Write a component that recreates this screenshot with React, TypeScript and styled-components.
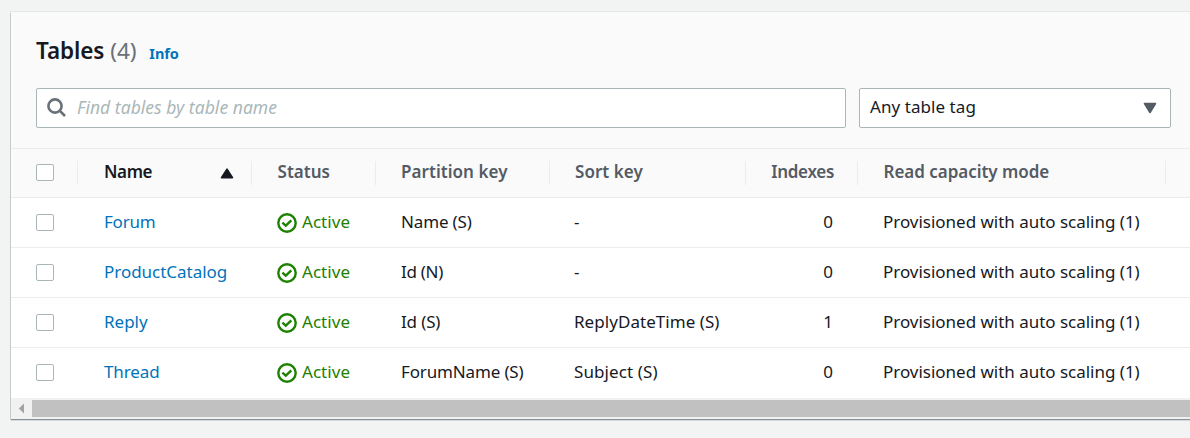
import React from 'react';
import styled, { createGlobalStyle } from 'styled-components';

const GlobalStyle = createGlobalStyle`
  * { box-sizing: border-box; }
  body {
    margin: 0;
    overflow: hidden;
    background: #f2f3f3;
    color: #16191f;
    font: 17px/24px "Noto Sans", "Open Sans", sans-serif;
  }
`;

const Page = styled.main`
  height: 438px;
  padding: 12px 0 0 11px;
  overflow: hidden;
`;

const Panel = styled.section`
  width: 1200px;
  height: 407px;
  background: #fff;
  box-shadow: 0 1px 0 0 #879196, -1px 1px 0 0 #c6cccd, 0 0 0 1px #e4e8e8, 0 2px 0 0 #d5dbdb;
`;

const PanelHeader = styled.header`
  height: 136px;
  padding: 24px 0 0 25px;
  background: #fafafa;
`;

const TitleLine = styled.div`
  display: flex;
  align-items: baseline;
  height: 30px;
  line-height: 30px;
`;

const Text = styled.span<{ $track?: number }>`
  letter-spacing: ${(p) => p.$track ?? 0}px;
  white-space: nowrap;
`;

const Title = styled.h2`
  margin: 0;
  font-size: 22.5px;
  font-weight: 600;
  letter-spacing: -0.1px;
`;

const Count = styled.span`
  margin-left: 6px;
  color: #687078;
  font-size: 22.5px;
  letter-spacing: -0.1px;
`;

const InfoLink = styled.a`
  margin-left: 13px;
  color: #0073bb;
  font-size: 14.5px;
  font-weight: 700;
  letter-spacing: -0.1px;
`;

const Filters = styled.div`
  display: flex;
  gap: 13px;
  margin-top: 22px;
`;

const Field = styled.div<{ $width: number }>`
  display: flex;
  align-items: center;
  width: ${(p) => p.$width}px;
  height: 40px;
  padding: 0 13px 2px 10px;
  border: 1px solid #aab7b8;
  border-radius: 2px;
  background: #fff;
`;

const Placeholder = styled(Text)`
  margin-left: 10px;
  color: #aab7b8;
  font-size: 17.5px;
  font-style: italic;
`;

const SearchGlyph = styled.svg`
  width: 20px;
  height: 20px;
  margin-top: 2px;
`;

const DownGlyph = styled.svg`
  width: 14px;
  height: 12px;
  margin: 2px 0 0 auto;
`;

const Row = styled.div`
  display: grid;
  grid-template-columns: 67px 174px 124px 174px 196px 112px 308px 1fr;
  height: 50px;
  border-top: 1px solid #eaeded;
  background: #fff;
`;

const HeadRow = styled(Row)`
  border-bottom: 1px solid #eaeded;
  background: #fafafa;
`;

const BodyRows = styled.div`
  height: 200px;
  & > :first-child { border-top: 0; height: 49px; }
`;

const Cell = styled.div<{ $end?: boolean; $inset?: number }>`
  display: flex;
  align-items: center;
  justify-content: ${(p) => (p.$end ? 'flex-end' : 'flex-start')};
  padding: 0 25px 1px ${(p) => (p.$end ? 0 : p.$inset ?? 25)}px;
`;

const HeadCell = styled(Cell)<{ $active?: boolean }>`
  height: 24px;
  margin-top: 12px;
  padding-right: 23px;
  padding-bottom: 2px;
  border-right: 1px solid #eaeded;
  color: ${(p) => (p.$active ? '#16191f' : '#545b64')};
  font-weight: 600;
`;

const CheckCell = styled(HeadCell)`
  padding: 0 0 1px 25px;
`;

const BodyCheckCell = styled(Cell)`
  padding: 0 0 0 25px;
`;

const Checkbox = styled.span`
  width: 18px;
  height: 17px;
  border: 1px solid #aab7b8;
  border-radius: 2px;
  background: #fff;
`;

const SortGlyph = styled.svg`
  width: 14px;
  height: 12px;
  margin: 3px -6px 0 auto;
`;

const TableLink = styled(Text)`
  color: #0073bb;
`;

const Status = styled.span`
  display: flex;
  align-items: center;
  gap: 5px;
  color: #1d8102;
`;

const StatusGlyph = styled.svg`
  width: 20px;
  height: 20px;
  margin-top: 2px;
  flex: none;
`;

const ScrollTrack = styled.div`
  display: flex;
  align-items: center;
  height: 21px;
  background: #f1f1f1;
`;

const ScrollArrow = styled.svg`
  width: 21px;
  height: 21px;
`;

const ScrollThumb = styled.div`
  flex: 1;
  height: 17px;
  background: #c1c1c1;
`;

type Tracked = [string, number];

const headings: { label: Tracked; inset?: number; end?: boolean }[] = [
  { label: ['Status', 0], inset: 25.6 },
  { label: ['Partition key', 0.05] },
  { label: ['Sort key', 0.05] },
  { label: ['Indexes', -0.3], end: true },
  { label: ['Read capacity mode', -0.03], inset: 25.5 },
];

const mode: Tracked = ['Provisioned with auto scaling (1)', -0.02];

const tables: { name: Tracked; partition: Tracked; sort: Tracked; indexes: string }[] = [
  { name: ['Forum', -0.2], partition: ['Name (S)', -0.15], sort: ['-', 0], indexes: '0' },
  { name: ['ProductCatalog', -0.03], partition: ['Id (N)', -0.3], sort: ['-', 0], indexes: '0' },
  { name: ['Reply', 0], partition: ['Id (S)', -0.15], sort: ['ReplyDateTime (S)', 0.05], indexes: '1' },
  { name: ['Thread', -0.1], partition: ['ForumName (S)', -0.15], sort: ['Subject (S)', 0.1], indexes: '0' },
];

const Label = ({ value }: { value: Tracked }) => <Text $track={value[1]}>{value[0]}</Text>;

export default function App() {
  return (
    <Page>
      <GlobalStyle />
      <Panel>
        <PanelHeader>
          <TitleLine>
            <Title>Tables</Title>
            <Count>(4)</Count>
            <InfoLink>Info</InfoLink>
          </TitleLine>
          <Filters>
            <Field $width={810}>
              <SearchGlyph viewBox="0 0 20 20" fill="none" stroke="#687078" strokeWidth="2.6">
                <circle cx="8" cy="8" r="6.6" />
                <path d="M12.6 12.6 18 18" />
              </SearchGlyph>
              <Placeholder $track={0.03}>Find tables by table name</Placeholder>
            </Field>
            <Field $width={312}>
              <Text $track={0.06}>Any table tag</Text>
              <DownGlyph viewBox="0 0 14 12">
                <path d="M1.5 1.5h11L7 10.5z" fill="#545b64" stroke="#545b64" strokeWidth="1.6" strokeLinejoin="round" />
              </DownGlyph>
            </Field>
          </Filters>
        </PanelHeader>
        <HeadRow>
          <CheckCell><Checkbox /></CheckCell>
          <HeadCell $active $inset={26}>
            <Text $track={-0.4}>Name</Text>
            <SortGlyph viewBox="0 0 14 12">
              <path d="M1.5 9.6h11L7 1.2z" fill="#16191f" stroke="#16191f" strokeWidth="1.6" strokeLinejoin="round" />
            </SortGlyph>
          </HeadCell>
          {headings.map((h) => (
            <HeadCell key={h.label[0]} $end={h.end} $inset={h.inset}><Label value={h.label} /></HeadCell>
          ))}
        </HeadRow>
        <BodyRows>
          {tables.map((t) => (
            <Row key={t.name[0]}>
              <BodyCheckCell><Checkbox /></BodyCheckCell>
              <Cell $inset={26}><TableLink $track={t.name[1]}>{t.name[0]}</TableLink></Cell>
              <Cell>
                <Status>
                  <StatusGlyph viewBox="0 0 20 20" fill="none" stroke="#1d8102" strokeWidth="2.4">
                    <circle cx="10" cy="10" r="8.7" />
                    <path d="m5.4 9.6 3.4 3.1 5.5-5.3" />
                  </StatusGlyph>
                  <Text $track={0.05}>Active</Text>
                </Status>
              </Cell>
              <Cell><Label value={t.partition} /></Cell>
              <Cell $inset={24}><Label value={t.sort} /></Cell>
              <Cell $end><Text>{t.indexes}</Text></Cell>
              <Cell><Label value={mode} /></Cell>
            </Row>
          ))}
        </BodyRows>
        <ScrollTrack>
          <ScrollArrow viewBox="0 0 21 21"><path d="M13 5.5v10L7.8 10.5z" fill="#a3a3a3" /></ScrollArrow>
          <ScrollThumb />
        </ScrollTrack>
      </Panel>
    </Page>
  );
}
